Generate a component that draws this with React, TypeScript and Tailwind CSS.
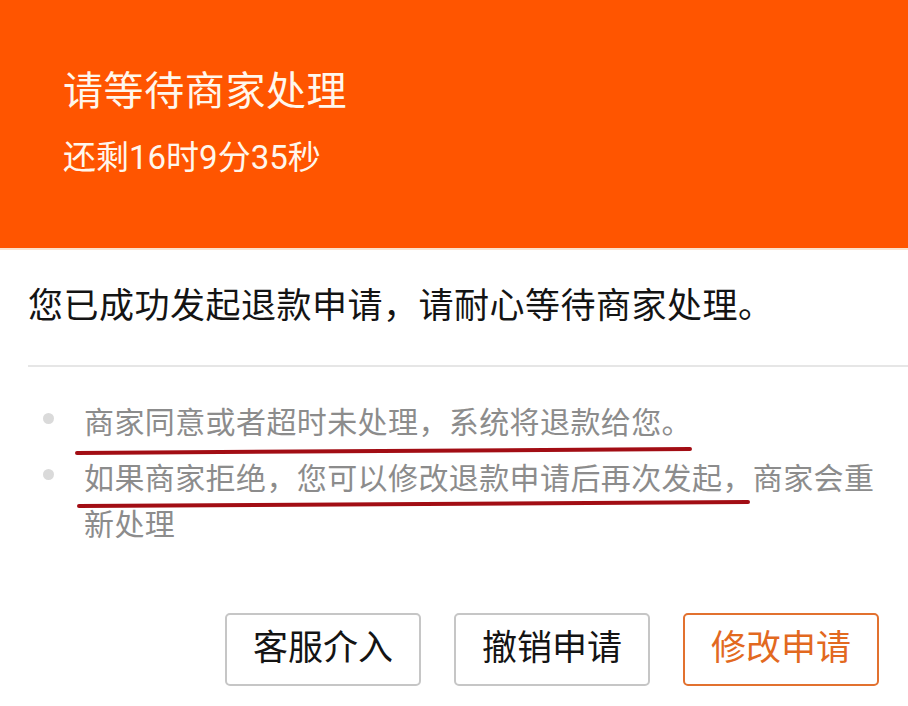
import React from "react";

const font = { fontFamily: "Roboto, 'Noto Sans CJK SC', 'Noto Sans', sans-serif" };

function Underline({ width, tilt, top, left }: { width: number; tilt: number; top: number; left: number }) {
  return (
    <svg
      className="absolute pointer-events-none"
      style={{ top, left }}
      width={width + 4}
      height={12}
      viewBox={`0 0 ${width + 4} 12`}
    >
      <path
        d={`M2 ${6 + tilt / 2} Q ${width / 2} ${6 + tilt / 2 - 1} ${width + 2} ${6 - tilt / 2}`}
        stroke="#a20d14"
        strokeWidth="4"
        strokeLinecap="round"
        fill="none"
      />
    </svg>
  );
}

export default function App() {
  return (
    <div className="w-[908px] h-[706px] overflow-hidden bg-white" style={font}>
      <div className="h-[248px] bg-[#ff5500] pl-[63px] pt-[68px] text-[#fff7ec]">
        <div className="text-[40px] leading-[48px] tracking-[0.6px]">请等待商家处理</div>
        <div className="mt-[22px] text-[33px] leading-[40px]">还剩16时9分35秒</div>
      </div>
      <div className="h-[2px] bg-[#fbe2cc]" />
      <div className="pt-[35px] pl-[28px] text-[35px] leading-[44px] tracking-[0.5px] text-[#141414]">
        您已成功发起退款申请，请耐心等待商家处理。
      </div>
      <div className="mt-[36px] ml-[28px] h-[2px] bg-[#e6e6e6]" />
      <ul className="mt-[33px] flex flex-col gap-[10px] pr-[28px]">
        <li className="relative flex items-start">
          <span className="ml-[43px] mt-[13px] h-[11px] w-[11px] shrink-0 rounded-full bg-[#dadada]" />
          <span className="ml-[30px] text-[30px] leading-[46px] tracking-[0.4px] text-[#8c8c8c]">
            商家同意或者超时未处理，系统将退款给您。
          </span>
          <Underline left={75} top={45} width={613} tilt={4} />
        </li>
        <li className="relative flex items-start">
          <span className="ml-[43px] mt-[13px] h-[11px] w-[11px] shrink-0 rounded-full bg-[#dadada]" />
          <span className="ml-[30px] text-[30px] leading-[46px] tracking-[0.4px] text-[#8c8c8c]">
            如果商家拒绝，您可以修改退款申请后再次发起，商家会重新处理
          </span>
          <Underline left={77} top={42} width={669} tilt={4} />
        </li>
      </ul>
      <div className="mt-[65px] flex justify-end gap-[33px] pr-[29px]">
        <button className="flex h-[73px] w-[196px] items-center justify-center rounded-[5px] border-2 border-[#c6c6c6] bg-white text-[35px] text-[#141414]">
          客服介入
        </button>
        <button className="flex h-[73px] w-[196px] items-center justify-center rounded-[5px] border-2 border-[#c6c6c6] bg-white text-[35px] text-[#141414]">
          撤销申请
        </button>
        <button className="flex h-[73px] w-[196px] items-center justify-center rounded-[5px] border-2 border-[#e2712f] bg-white text-[35px] text-[#e2691f]">
          修改申请
        </button>
      </div>
    </div>
  );
}
